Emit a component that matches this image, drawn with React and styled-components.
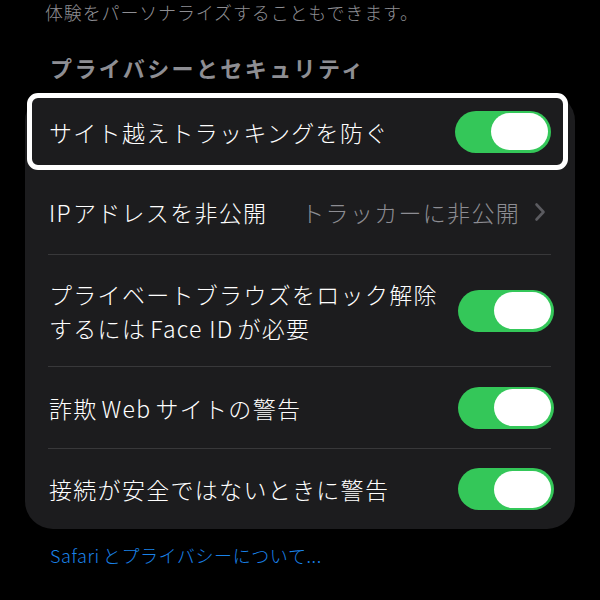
import React from "react";
import styled, { createGlobalStyle } from "styled-components";

const GlobalStyle = createGlobalStyle`
  html, body {
    margin: 0;
    padding: 0;
    background: #000;
  }
  body {
    font-family: "Noto Sans CJK JP", "Noto Sans", sans-serif;
    -webkit-font-smoothing: antialiased;
  }
`;

const Page = styled.div`
  width: 600px;
  height: 600px;
  overflow: hidden;
  background: #000;
  box-sizing: border-box;
  padding: 0 25px;
`;

const Note = styled.div`
  margin-left: 20px;
  font-size: 18px;
  line-height: 24px;
  font-weight: 300;
  letter-spacing: 0.85px;
  color: #8e8e93;
`;

const SectionTitle = styled.div`
  margin: 28px 0 0 25px;
  font-size: 22px;
  line-height: 30px;
  font-weight: 700;
  letter-spacing: 2.4px;
  color: #8e8e93;
`;

const Card = styled.div`
  margin-top: 13px;
  background: #1c1c1e;
  border-radius: 28px;
`;

const Row = styled.div`
  display: flex;
  align-items: center;
  box-sizing: border-box;
  height: ${(p) => p.$h}px;
  padding: 0 21px 0 24px;
  color: #fff;
  ${(p) =>
    p.$highlight &&
    `
    margin: -2px 7px 0 2px;
    padding: 0 12px 0 17px;
    border: 5px solid #fff;
    border-radius: 11px;
    background: #1c1c1e;
  `}
`;

const Divider = styled.div`
  height: 1px;
  margin: 0 24px 0 23px;
  background: #38383a;
`;

const Label = styled.div`
  flex: 1;
  font-size: 23px;
  line-height: 34px;
  font-weight: 300;
  letter-spacing: 1.3px;
  white-space: nowrap;
`;

const Gap = styled.span`
  display: inline-block;
  width: ${(p) => p.$w || 4}px;
`;

const Value = styled.div`
  font-size: 23px;
  font-weight: 300;
  letter-spacing: 1.3px;
  color: #8d8d93;
  margin-right: 14px;
`;

const Track = styled.div`
  width: 96px;
  height: 42px;
  border-radius: 21px;
  background: #34c759;
  display: flex;
  align-items: center;
  justify-content: flex-end;
  padding-right: 3px;
  box-sizing: border-box;
  flex-shrink: 0;
`;

const Knob = styled.div`
  width: 57px;
  height: 37px;
  border-radius: 19px;
  background: #fff;
`;

const ChevronBox = styled.div`
  display: flex;
  margin-right: 8px;
`;

const Link = styled.div`
  margin: 14px 0 0 25px;
  font-size: 18px;
  line-height: 24px;
  font-weight: 300;
  letter-spacing: 0.6px;
  color: #1a82e8;
`;

const Toggle = () => (
  <Track>
    <Knob />
  </Track>
);

const Chevron = () => (
  <ChevronBox>
    <svg width="12" height="20" viewBox="0 0 12 20">
      <path
        d="M2.5 2.5 L9.5 10 L2.5 17.5"
        fill="none"
        stroke="#5b5b60"
        strokeWidth="2.6"
        strokeLinecap="round"
        strokeLinejoin="round"
      />
    </svg>
  </ChevronBox>
);

export default function App() {
  return (
    <>
      <GlobalStyle />
      <Page>
        <Note>体験をパーソナライズすることもできます。</Note>
        <SectionTitle>プライバシーとセキュリティ</SectionTitle>
        <Card>
          <Row $h={77} $highlight>
            <Label>サイト越えトラッキングを防ぐ</Label>
            <Toggle />
          </Row>
          <Row $h={84}>
            <Label>
              IP<Gap $w={1} />アドレスを非公開
            </Label>
            <Value>トラッカーに非公開</Value>
            <Chevron />
          </Row>
          <Divider />
          <Row $h={111}>
            <Label>
              プライベートブラウズをロック解除
              <br />
              するには<Gap />Face ID<Gap />が必要
            </Label>
            <Toggle />
          </Row>
          <Divider />
          <Row $h={81}>
            <Label>
              詐欺<Gap />Web<Gap />サイトの警告
            </Label>
            <Toggle />
          </Row>
          <Divider />
          <Row $h={80}>
            <Label>接続が安全ではないときに警告</Label>
            <Toggle />
          </Row>
        </Card>
        <Link>
          Safari<Gap $w={3} />とプライバシーについて...
        </Link>
      </Page>
    </>
  );
}
